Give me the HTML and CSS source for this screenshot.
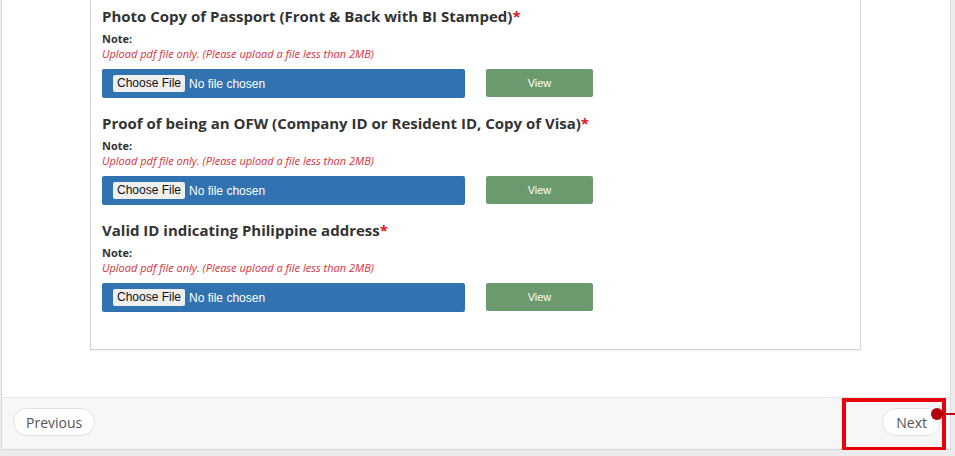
FILE: index.html
```html
<!DOCTYPE html>
<html lang="en">
<head>
  <meta charset="UTF-8" />
  <meta name="viewport" content="width=device-width, initial-scale=1.0"/>
  <title>OFW Application - Documents</title>
  <link rel="stylesheet" href="styles.css">
</head>
<body>

  <div class="wizard">
    <div class="wizard-body">
      <div class="card">

        <div class="upload">
          <h3>Photo Copy of Passport (Front &amp; Back with BI Stamped)<span class="req">*</span></h3>
          <div class="note-label">Note:</div>
          <div class="note">Upload pdf file only. (Please upload a file less than 2MB)</div>
          <div class="file-row">
            <input type="file" class="file-box" accept="application/pdf" />
            <button class="btn-view">View</button>
          </div>
        </div>

        <div class="upload">
          <h3>Proof of being an OFW (Company ID or Resident ID, Copy of Visa)<span class="req">*</span></h3>
          <div class="note-label">Note:</div>
          <div class="note">Upload pdf file only. (Please upload a file less than 2MB)</div>
          <div class="file-row">
            <input type="file" class="file-box" accept="application/pdf" />
            <button class="btn-view">View</button>
          </div>
        </div>

        <div class="upload">
          <h3>Valid ID indicating Philippine address<span class="req">*</span></h3>
          <div class="note-label">Note:</div>
          <div class="note">Upload pdf file only. (Please upload a file less than 2MB)</div>
          <div class="file-row">
            <input type="file" class="file-box" accept="application/pdf" />
            <button class="btn-view">View</button>
          </div>
        </div>

      </div>
    </div>

    <div class="wizard-footer">
      <button class="btn-pill">Previous</button>
      <div class="next-wrap">
        <button class="btn-pill">Next</button>
        <!-- annotation drawn over the next button -->
        <span class="mark-box"></span>
        <span class="mark-dot"></span>
        <span class="mark-line"></span>
      </div>
    </div>
  </div>

</body>
</html>
```

FILE: styles.css
```css
body {
  margin: 0;
  background: #ececec;
  font-family: 'Open Sans', 'Liberation Sans', sans-serif;
  color: #333;
  overflow: hidden;
}

.wizard {
  width: 948px;
  margin: -40px 0 0 1px;
  background: #fff;
  border: 1px solid #dadada;
}

.wizard-body {
  padding: 20px 89px 47px 88px;
}

.card {
  border: 1px solid #d3d3d3;
  box-shadow: 0 1px 1px rgba(0, 0, 0, 0.05);
  padding: 24px 11px 22px 11px;
}

.upload {
  margin-bottom: 16px;
}

.upload h3 {
  margin: 0 0 5px 0;
  font-size: 15px;
  line-height: 20px;
  font-weight: 700;
  color: #333;
}

.req {
  color: #e4111b;
}

.note-label {
  font-size: 11px;
  line-height: 15px;
  font-weight: 700;
}

.note {
  font-size: 11px;
  line-height: 15px;
  font-style: italic;
  color: #dc2f3a;
}

.file-row {
  display: flex;
  align-items: center;
  gap: 21px;
  margin-top: 8px;
  height: 28px;
}

.file-box {
  box-sizing: border-box;
  width: 363px;
  height: 29px;
  padding: 6px 0 6px 11px;
  background: #3173b1;
  border-radius: 2px;
  color: #fff;
  font-family: 'Liberation Sans', Arial, sans-serif;
  font-size: 12px;
}

.file-box::file-selector-button {
  font-family: 'Liberation Sans', Arial, sans-serif;
  font-size: 12px;
  height: 17px;
  padding: 0 4px;
  margin-right: 4px;
  background: #efefef;
  color: #111;
  border: none;
  border-radius: 2px;
}

.btn-view {
  width: 107px;
  height: 28px;
  border: none;
  border-radius: 2px;
  background: #6b9a6e;
  color: #fff;
  font-family: 'Liberation Sans', Arial, sans-serif;
  font-size: 11px;
}

.wizard-footer {
  display: flex;
  justify-content: space-between;
  align-items: flex-start;
  height: 41px;
  padding: 10px 9px 0 11px;
  background: #f7f7f7;
  border-top: 1px solid #e6e6e6;
}

.btn-pill {
  height: 28px;
  padding: 0 12px;
  border: 1px solid #e2e2e2;
  border-radius: 15px;
  background: #fff;
  color: #555;
  font-family: 'Open Sans', sans-serif;
  font-size: 14px;
}

.next-wrap {
  position: relative;
}

.next-wrap .btn-pill {
  padding: 0 13px;
}

.mark-box {
  position: absolute;
  left: -40px;
  top: -10px;
  width: 96px;
  height: 45px;
  border: 4px solid #e8000b;
}

.mark-dot {
  position: absolute;
  left: 49px;
  top: 0px;
  width: 12px;
  height: 12px;
  border-radius: 50%;
  background: #b3000c;
}

.mark-line {
  position: absolute;
  left: 60px;
  top: 5px;
  width: 20px;
  height: 2px;
  background: #c0000c;
}
```
